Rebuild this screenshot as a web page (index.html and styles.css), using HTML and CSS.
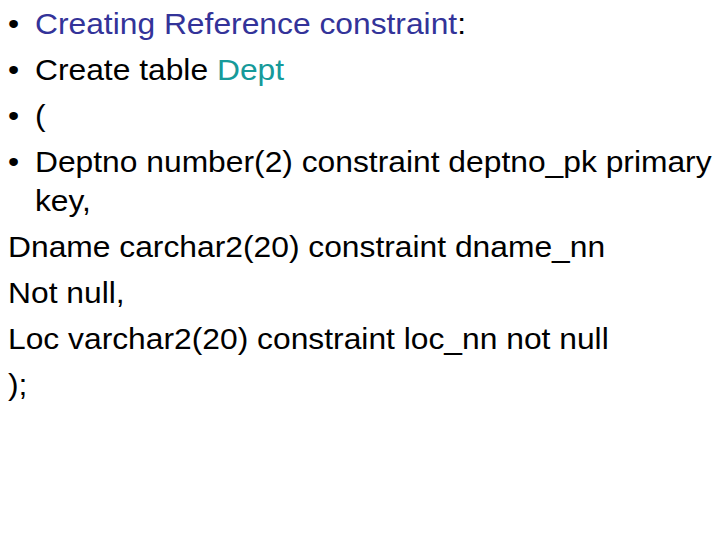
FILE: index.html
```html
<!DOCTYPE html>
<html>
<head>
<meta charset="utf-8">
<link rel="stylesheet" href="styles.css">
</head>
<body>
<div class="slide">
  <ul class="list">
    <li class="item"><span class="bullet">•</span><span class="text"><span class="navy">Creating Reference constraint</span>:</span></li>
    <li class="item"><span class="bullet">•</span><span class="text">Create table <span class="teal">Dept</span></span></li>
    <li class="item"><span class="bullet">•</span><span class="text">(</span></li>
    <li class="item"><span class="bullet">•</span><span class="text">Deptno number(2) constraint deptno_pk primary key,</span></li>
  </ul>
  <p class="line">Dname carchar2(20) constraint dname_nn</p>
  <p class="line">Not null,</p>
  <p class="line">Loc varchar2(20) constraint loc_nn not null</p>
  <p class="line">);</p>
</div>
</body>
</html>
```
FILE: styles.css
```css
html, body {
  margin: 0;
  padding: 0;
  background: #ffffff;
  overflow: hidden;
}
.slide {
  width: 657px;
  height: 540px;
  box-sizing: border-box;
  padding: 5px 0 0 7.3px;
  font-family: "Liberation Sans", Arial, sans-serif;
  font-size: 29px;
  line-height: 39px;
  color: #000000;
  transform: scaleX(1.096);
  transform-origin: 0 0;
}
.list {
  list-style: none;
  margin: 0;
  padding: 0;
}
.item {
  display: flex;
  margin-bottom: 7px;
}
.bullet {
  flex: 0 0 24.6px;
}
.text {
  flex: 1 1 auto;
}
.navy {
  color: #333399;
}
.teal {
  color: #169a9a;
}
.line {
  margin: 0 0 7px 0;
}
```
